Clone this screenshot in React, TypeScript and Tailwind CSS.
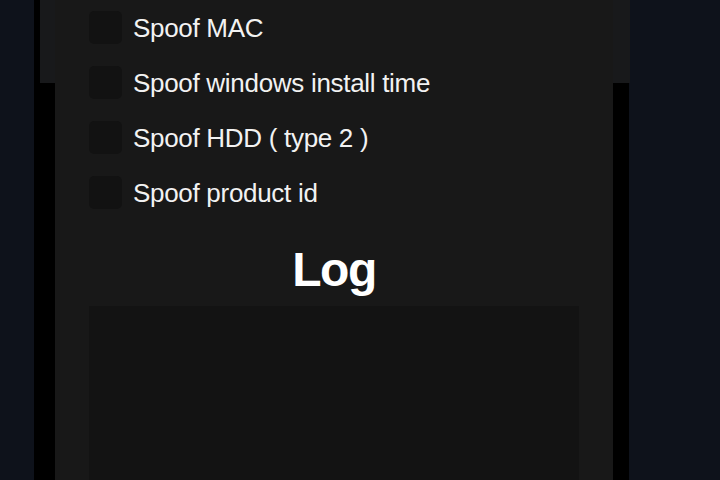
import React from "react";

const options = [
  "Spoof MAC",
  "Spoof windows install time",
  "Spoof HDD ( type 2 )",
  "Spoof product id",
];

export default function App() {
  return (
    <div
      className="h-[480px] w-[720px] overflow-hidden bg-[#0e121b]"
      style={{ fontFamily: '"Liberation Sans", Arial, sans-serif' }}
    >
      <div className="relative ml-[34px] h-full w-[595px] bg-black pl-[21px] pr-[16px]">
        {/* bande du haut, derrière le panneau */}
        <div className="absolute left-[6px] top-0 h-[83px] w-[590px] bg-[#18191b]" />

        <div className="relative h-full bg-[#181818] pt-[11px]">
          <div className="flex flex-col gap-[22px] pl-[34px]">
            {options.map((label) => (
              <label key={label} className="flex h-[33px] items-center gap-[11px]">
                <span className="h-[33px] w-[33px] rounded-[5px] bg-[#121212]" />
                <span className="pt-[2px] text-[26px] leading-[33px] tracking-[-0.3px] text-[#f2f2f2]">
                  {label}
                </span>
              </label>
            ))}
          </div>

          <h2 className="mt-[37px] text-center text-[48px] font-bold leading-[48px] tracking-[-1.5px] text-white">
            Log
          </h2>

          <div className="mx-[34px] mt-[12px] h-[200px] bg-[#131313]" />
        </div>
      </div>
    </div>
  );
}
